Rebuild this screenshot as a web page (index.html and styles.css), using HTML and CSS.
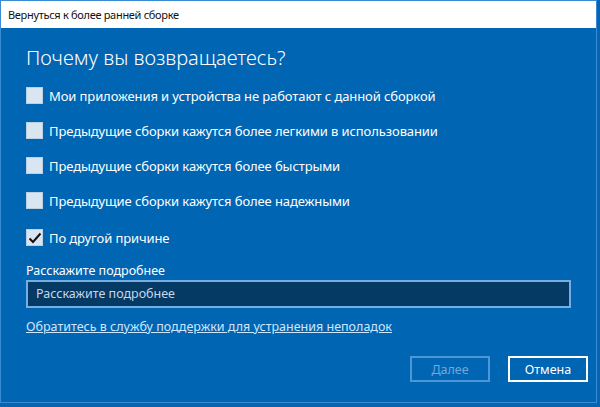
FILE: index.html
```html
<!DOCTYPE html>
<html lang="ru">

<head>
    <meta charset="UTF-8">
    <title>Вернуться к более ранней сборке</title>
    <link rel="stylesheet" href="styles.css">
</head>

<body>
    <div class="window">
        <div class="titlebar">Вернуться к более ранней сборке</div>
        <div class="main">
            <h1>Почему вы возвращаетесь?</h1>
            <ul class="reasons">
                <li><span class="box"></span>Мои приложения и устройства не работают с данной сборкой</li>
                <li><span class="box"></span>Предыдущие сборки кажутся более легкими в использовании</li>
                <li><span class="box"></span>Предыдущие сборки кажутся более быстрыми</li>
                <li><span class="box"></span>Предыдущие сборки кажутся более надежными</li>
                <li><span class="box checked">
                        <svg width="14" height="14" viewBox="0 0 14 14">
                            <path d="M1.5 7.5 L5 11 L12.5 2.5" fill="none" stroke="#111" stroke-width="2" />
                        </svg>
                    </span>По другой причине</li>
            </ul>
            <div class="more-label">Расскажите подробнее</div>
            <div class="more-input">Расскажите подробнее</div>
            <a class="support" href="#">Обратитесь в службу поддержки для устранения неполадок</a>
            <div class="buttons">
                <button class="btn disabled">Далее</button>
                <button class="btn">Отмена</button>
            </div>
        </div>
    </div>
</body>

</html>
```

FILE: styles.css
```css
* {
    padding: 0;
    margin: 0;
    box-sizing: border-box;
}

body {
    background-color: #0664b0;
    font-family: "Noto Sans", "Open Sans", sans-serif;
    width: 600px;
    height: 407px;
    overflow: hidden;
}

.window {
    width: 597px;
    height: 403px;
    border: 1px solid #3a8ad4;
    background-color: #0065b3;
    display: flex;
    flex-direction: column;
}

.titlebar {
    height: 27px;
    line-height: 27px;
    background-color: white;
    color: #111;
    font-size: 11px;
    padding-left: 7px;
    letter-spacing: -0.3px;
}

.main {
    flex: 1;
    padding: 16px 25px 0;
    color: white;
    display: flex;
    flex-direction: column;
}

h1 {
    font-size: 20px;
    font-weight: 300;
    line-height: 28px;
    height: 28px;
    margin-bottom: 6px;
}

.reasons li {
    list-style: none;
    height: 35px;
    display: flex;
    align-items: center;
    font-size: 13px;
    letter-spacing: -0.1px;
}

.box {
    width: 17px;
    height: 17px;
    margin-right: 6px;
    background-color: #d9e5f1;
    border: 1px solid #bcd0e4;
    display: flex;
    align-items: center;
    justify-content: center;
}

.reasons li:last-child {
    height: 37px;
    padding-top: 2px;
}

.more-label {
    font-size: 12.5px;
    line-height: 18px;
    margin-top: 7px;
}

.more-input {
    width: 545px;
    height: 28px;
    line-height: 24px;
    border: 2px solid #74aee2;
    background-color: #043a64;
    color: #c4d6e8;
    font-size: 12.5px;
    padding-left: 8px;
}

.support {
    margin-top: 10px;
    color: #cfe6ff;
    font-size: 12.5px;
    line-height: 18px;
    align-self: flex-start;
}

.buttons {
    margin-top: 20px;
    margin-right: -17px;
    display: flex;
    justify-content: flex-end;
    gap: 18px;
}

.btn {
    width: 80px;
    height: 26px;
    background-color: transparent;
    border: 2px solid white;
    color: white;
    font-family: "Noto Sans", "Open Sans", sans-serif;
    font-size: 12.5px;
}

.btn.disabled {
    border-color: #4d97d6;
    color: #6fa8dc;
}
```
